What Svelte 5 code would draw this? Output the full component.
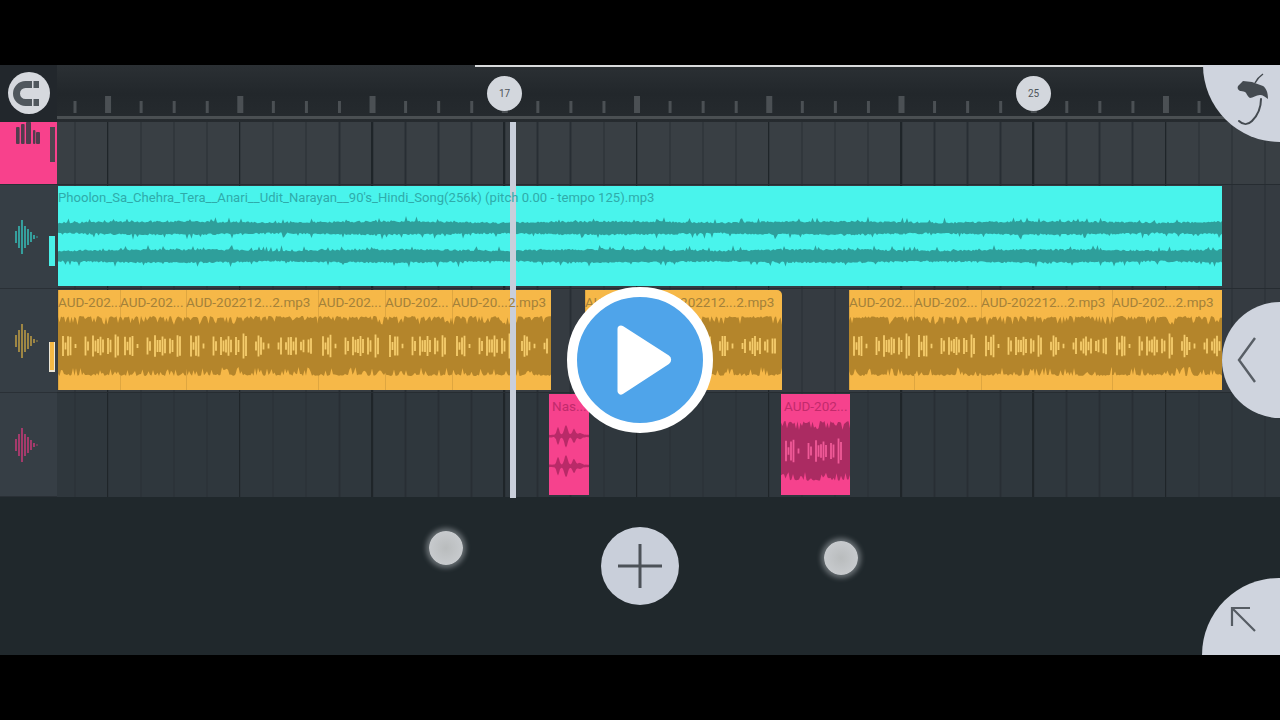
<script>
	const BEAT = 33.06;
	const ticks = [];
	for (let i = 0; i < 37; i++) {
		ticks.push({ x: 75 + i * BEAT - 57, tall: (i - 1) % 4 === 0 });
	}

	function rng(seed) {
		let s = seed * 9301 + 49297;
		return () => {
			s = (s * 1664525 + 1013904223) % 4294967296;
			return s / 4294967296;
		};
	}

	// mirrored envelope around cy, amp(x, rand) gives half height
	function band(w, cy, amp, seed, step = 1.5) {
		const r = rng(seed);
		const up = [];
		const down = [];
		for (let x = 0; x <= w + step; x += step) {
			up.push(`${x.toFixed(1)} ${(cy - amp(x, r)).toFixed(1)}`);
			down.unshift(`${x.toFixed(1)} ${(cy + amp(x, r)).toFixed(1)}`);
		}
		return 'M' + up.join('L') + 'L' + down.join('L') + 'Z';
	}

	// light spikes in the middle of a heavy clip, the same loop repeats every 66px
	const clusters = [
		[3, 13, 12],
		[16, 18, 3],
		[26, 30, 10],
		[33, 46, 11],
		[48, 53, 9],
		[56, 61, 13]
	];
	function spikes(w, cy, seed) {
		const r = rng(seed);
		let d = '';
		for (let x = 0; x < w; x += 2.5) {
			const p = x % 66;
			const c = clusters.find((k) => p >= k[0] && p <= k[1]);
			if (!c) continue;
			const a = c[2] * (0.3 + 0.7 * Math.abs(Math.sin(x * 0.85))) * (0.8 + r() * 0.2);
			d += `M${x} ${(cy - a).toFixed(1)}V${(cy + a).toFixed(1)}`;
		}
		return d;
	}

	const heavy = (x, r) => 30 - (r() < 0.4 ? r() * 9 : r() * 2);
	const thin = (x, r) => 4.2 + r() * 1.8 + (r() < 0.1 ? r() * 5 : 0) + Math.abs(Math.sin(x / 70)) * 1.4;
	const nasal = (x, r) => {
		const b = (c, s, a) => a * Math.exp(-((x - c) ** 2) / s);
		return 1 + b(9, 3, 8) + b(17, 5, 10) + b(25, 4, 6) + b(31, 6, 2) + r() * 0.5;
	};

	const yellow = [
		[58, 62, 'AUD-202...'],
		[120, 66, 'AUD-202...'],
		[186, 132, 'AUD-202212...2.mp3'],
		[318, 67, 'AUD-202...'],
		[385, 67, 'AUD-202...'],
		[452, 99, 'AUD-20...2.mp3'],
		[585, 65, 'AUD-202...'],
		[650, 132, 'AUD-202212...2.mp3'],
		[849, 65, 'AUD-202...'],
		[914, 67, 'AUD-202...'],
		[981, 131, 'AUD-202212...2.mp3'],
		[1112, 110, 'AUD-202...2.mp3']
	];
</script>

{#snippet meter(color)}
	<svg class="meter" width="26" height="36" viewBox="0 0 26 36" fill="none" stroke={color} stroke-width="1.4">
		<path d="M1 12v12M4 7v22M7 1v34M10 7v22M13 10v16M16 13v10M19 16v4M22 17.5v1" />
	</svg>
{/snippet}

<div class="screen">
	<div class="letterbox"></div>
	<main class="daw">
		<div class="progress"></div>

		<header class="ruler">
			<div class="ruler-left">
				<button class="magnet" aria-label="Snap">
					<svg width="32" height="30" viewBox="0 0 32 30" fill="none">
						<path d="M19 6.5h-6.5a9 9 0 0 0 0 18H19" stroke="#50575d" stroke-width="7" />
						<rect x="20.5" y="3" width="5.5" height="7" fill="#50575d" />
						<rect x="20.5" y="21" width="5.5" height="7" fill="#50575d" />
					</svg>
				</button>
			</div>
			<div class="ruler-track">
				<svg class="ticks" width="1223" height="57" viewBox="0 0 1223 57">
					{#each ticks as t}
						<rect
							x={t.tall ? t.x - 3 : t.x - 1.5}
							y={t.tall ? 31 : 36}
							width={t.tall ? 6 : 3}
							height={t.tall ? 17 : 12}
							fill="#4b5054"
						/>
					{/each}
				</svg>
				<span class="badge b17">17</span>
				<span class="badge b25">25</span>
				<div class="ruler-band"></div>
			</div>
		</header>

		<section class="tracks">
			<div class="playhead"></div>

			<div class="track row-first">
				<div class="head head-pink">
					<svg class="eq" width="26" height="22" viewBox="0 0 26 22" fill="#513d4e">
						<rect x="1" y="5" width="3.6" height="17" rx="1" />
						<rect x="6" y="2" width="3.6" height="20" rx="1" />
						<rect x="11" y="0" width="5" height="22" rx="1" />
						<rect x="18" y="8" width="2.4" height="14" rx="1" />
						<rect x="21" y="10" width="4" height="12" rx="1" />
					</svg>
					<span class="slider slider-dark"></span>
				</div>
				<div class="lane lane-top"></div>
			</div>

			<div class="track row-cyan">
				<div class="head">
					{@render meter('#35c8c2')}
					<span class="slider slider-cyan"></span>
				</div>
				<div class="lane">
					<div class="clip cyan" style="left:1px;width:1164px">
						<span class="label">Phoolon_Sa_Chehra_Tera__Anari__Udit_Narayan__90's_Hindi_Song(256k) (pitch 0.00 - tempo 125).mp3</span>
						<svg class="wave" width="1164" height="100" viewBox="0 0 1164 100" fill="#2e9f9b">
							<path d={band(1164, 42, thin, 3)} />
							<path d={band(1164, 70, thin, 8)} />
						</svg>
					</div>
				</div>
			</div>

			<div class="track row-yellow">
				<div class="head">
					{@render meter('#c9a545')}
					<span class="slider slider-yellow"></span>
				</div>
				<div class="lane">
					{#each yellow as [x, w, label], i}
						<div class="clip gold" class:rounded={x === 650} style="left:{x - 57}px;width:{w}px">
							<span class="label">{label}</span>
							<svg class="wave" width={w} height="100" viewBox="0 0 {w} 100">
								<path d={band(w, 56, heavy, 20 + i)} fill="#b4852b" />
								<path d={spikes(w, 56, 40 + i)} stroke="#f6cd6d" stroke-width="1.8" fill="none" />
							</svg>
						</div>
					{/each}
				</div>
			</div>

			<div class="track row-pink">
				<div class="head">
					{@render meter('#d23a7c')}
				</div>
				<div class="lane lane-bottom">
					<div class="clip pink nas">
						<span class="label">Nas...</span>
						<svg class="wave" width="40" height="101" viewBox="0 0 40 101" fill="#b92a68">
							<path d={band(40, 42, nasal, 5, 1)} />
							<path d={band(40, 72, nasal, 6, 1)} />
						</svg>
					</div>
					<div class="clip pink aud">
						<span class="label">AUD-202...</span>
						<svg class="wave" width="69" height="101" viewBox="0 0 69 101">
							<path d={band(69, 57, heavy, 11)} fill="#ab2b62" />
							<path d={spikes(69, 57, 12)} stroke="#f05a98" stroke-width="1.8" fill="none" />
						</svg>
					</div>
				</div>
			</div>
		</section>

		<footer class="footer">
			<button class="plus" aria-label="Add">
				<svg width="46" height="46" viewBox="0 0 46 46" stroke="#4c5258" stroke-width="3" fill="none">
					<path d="M23 1v44M1 23h44" />
				</svg>
			</button>
		</footer>

		<!-- overlays -->
		<button class="corner fruit" aria-label="Menu">
			<svg width="40" height="60" viewBox="0 0 40 60" fill="none">
				<path
					d="M3 14L8 9l9 1 11 4c3 2 5 6 5 13-3-2-5-4-8-4-4 0-7 3-10 3-3-2-4-6-5-6-2-1-4-1-5-1-2-1-3-3-2-5z"
					fill="#444a50"
				/>
				<path d="M20 11c2-4 5-7 8-9" stroke="#444a50" stroke-width="1.5" />
				<path d="M26 27c0 9-4 17-9 22-4 4-9 4-13 0" stroke="#444a50" stroke-width="2" stroke-linecap="round" />
			</svg>
		</button>
		<button class="corner back" aria-label="Back">
			<svg width="22" height="48" viewBox="0 0 22 48" fill="none" stroke="#585e65" stroke-width="2.4">
				<path d="M18 2L2 24l16 22" />
			</svg>
		</button>
		<button class="corner expand" aria-label="Expand">
			<svg width="28" height="28" viewBox="0 0 28 28" fill="none" stroke="#565c63" stroke-width="2.2">
				<path d="M26 26L3 3M3 21V3h18" />
			</svg>
		</button>

		<span class="touch t1"></span>
		<span class="touch t2"></span>

		<button class="play" aria-label="Play">
			<svg width="58" height="72" viewBox="0 0 58 72">
				<path d="M5 5L51 34.5a1.5 1.5 0 0 1 0 2.5L5 67z" fill="#fff" stroke="#fff" stroke-width="7" stroke-linejoin="round" />
			</svg>
		</button>
	</main>
	<div class="letterbox"></div>
</div>

<style>
	:global(body) {
		margin: 0;
		background: #000;
	}

	.screen {
		width: 1280px;
		height: 720px;
		display: flex;
		flex-direction: column;
		font-family: Roboto, 'Liberation Sans', sans-serif;
		overflow: hidden;
	}

	.letterbox {
		height: 65px;
		flex: none;
		background: #000;
	}

	.daw {
		position: relative;
		height: 590px;
		flex: none;
		display: flex;
		flex-direction: column;
		background: #20282c;
		overflow: hidden;
	}

	button {
		border: 0;
		padding: 0;
		display: flex;
		align-items: center;
		justify-content: center;
	}

	.progress {
		position: absolute;
		left: 475px;
		top: 0;
		width: 730px;
		height: 2px;
		background: #d8dadc;
		z-index: 2;
	}

	/* ruler */
	.ruler {
		height: 57px;
		flex: none;
		display: flex;
		background: linear-gradient(#2b3034, #22272b 50%, #262b2f);
	}

	.ruler-left {
		width: 57px;
		flex: none;
		display: flex;
		align-items: center;
		padding-left: 8px;
		box-sizing: border-box;
		background: #22272c;
	}

	.magnet {
		width: 42px;
		height: 42px;
		margin-top: -2px;
		border-radius: 50%;
		background: #d6d9de;
	}

	.ruler-track {
		position: relative;
		flex: 1;
	}

	.ticks {
		display: block;
	}

	.ruler-band {
		position: absolute;
		left: 0;
		right: 0;
		top: 51px;
		height: 3px;
		background: #4a4f52;
	}

	.badge {
		position: absolute;
		top: 11px;
		width: 35px;
		height: 35px;
		border-radius: 50%;
		background: #d3d7dd;
		color: #4e545a;
		font-size: 10px;
		line-height: 35px;
		text-align: center;
	}

	.b17 {
		left: 430px;
	}

	.b25 {
		left: 959px;
	}

	/* tracks */
	.tracks {
		position: relative;
		display: flex;
		flex-direction: column;
		flex: none;
	}

	.playhead {
		position: absolute;
		left: 510px;
		top: 0;
		bottom: -1px;
		width: 6px;
		background: #c9cfdb;
		z-index: 1;
	}

	.track {
		display: flex;
		flex: none;
	}

	.row-first {
		height: 63px;
	}

	.row-cyan,
	.row-yellow,
	.row-pink {
		height: 104px;
	}

	.head {
		position: relative;
		width: 57px;
		flex: none;
		display: flex;
		align-items: center;
		padding-left: 15px;
		box-sizing: border-box;
		background: #363e45;
		box-shadow: inset 0 -1px 0 #2a3036;
	}

	.head-pink {
		background: #f8418c;
		align-items: flex-start;
		padding-left: 15px;
	}

	.eq {
		display: block;
	}

	.meter {
		display: block;
		margin-top: -1px;
	}

	.slider {
		position: absolute;
		left: 49px;
		width: 6px;
	}

	.slider-dark {
		top: 5px;
		height: 35px;
		left: 50px;
		width: 5px;
		background: #4f4650;
	}

	.slider-cyan {
		top: 51px;
		height: 30px;
		background: #4af0e8;
	}

	.slider-yellow {
		top: 53px;
		height: 30px;
		background: #f4b945;
		border: solid #ece6d6;
		border-width: 0 1px 2px 1px;
		box-sizing: border-box;
	}

	.lane {
		position: relative;
		flex: 1;
		background-color: #353b41;
		background-image:
			repeating-linear-gradient(90deg, transparent 0 130.74px, #1f2529 130.74px 132.24px),
			repeating-linear-gradient(90deg, transparent 0 31.56px, #282e34 31.56px 33.06px);
		background-position: -81px 0, -14.5px 0;
		box-shadow: inset 0 -1px 0 #262c31;
	}

	.lane-top {
		background-color: #393f44;
	}

	.lane-bottom {
		background-color: #2f373d;
		box-shadow: none;
	}

	.clip {
		position: absolute;
		top: 1px;
		height: 100px;
		box-sizing: border-box;
		overflow: hidden;
		box-shadow: inset 1px 0 0 rgba(150, 110, 40, 0.25);
	}

	.rounded {
		border-top-right-radius: 5px;
	}

	.label {
		position: absolute;
		left: 0;
		top: 5px;
		font-size: 13.5px;
		line-height: 14px;
		white-space: nowrap;
		z-index: 1;
	}

	.wave {
		position: absolute;
		left: 0;
		top: 0;
		display: block;
	}

	.cyan {
		background: #49f4ec;
		box-shadow: none;
	}

	.cyan .label {
		color: #2fabaa;
		font-size: 13.1px;
	}

	.gold {
		background: #f6b848;
	}

	.gold .label {
		color: #a3813a;
	}

	.pink {
		background: #f6428d;
		box-shadow: none;
		height: 101px;
	}

	.pink .label {
		color: #c22a6c;
		left: 3px;
	}

	.nas {
		left: 492px;
		width: 40px;
	}

	.aud {
		left: 724px;
		width: 69px;
	}

	/* footer */
	.footer {
		flex: 1;
		display: flex;
		justify-content: center;
		align-items: flex-start;
		padding-top: 30px;
		background: #20282c;
	}

	.plus {
		width: 78px;
		height: 78px;
		margin-left: -1px;
		border-radius: 50%;
		background: #c9cfda;
	}

	/* overlays */
	.corner {
		position: absolute;
		right: 0;
		background: #cfd4de;
		z-index: 2;
	}

	.fruit {
		top: -77px;
		width: 77px;
		height: 154px;
		border-radius: 77px 0 0 77px;
		justify-content: flex-start;
	}

	.fruit svg {
		position: absolute;
		left: 32px;
		top: 84px;
	}

	.back {
		top: 237px;
		width: 58px;
		height: 116px;
		border-radius: 58px 0 0 58px;
		justify-content: flex-start;
		padding-left: 15px;
		box-sizing: border-box;
	}

	.expand {
		top: 513px;
		width: 78px;
		height: 154px;
		border-radius: 77px 0 0 77px;
	}

	.expand svg {
		position: absolute;
		left: 27px;
		top: 27px;
	}

	.touch {
		position: absolute;
		width: 34px;
		height: 34px;
		border-radius: 50%;
		background: radial-gradient(circle, #b9bcbd, #cdd0d4);
		box-shadow: 0 0 5px 3px rgba(210, 214, 220, 0.4);
		z-index: 2;
	}

	.t1 {
		left: 429px;
		top: 466px;
	}

	.t2 {
		left: 824px;
		top: 476px;
	}

	.play {
		position: absolute;
		left: 567px;
		top: 222px;
		width: 146px;
		height: 146px;
		box-sizing: border-box;
		border: 10px solid #fff;
		border-radius: 50%;
		background: #4fa4ea;
		z-index: 3;
		padding-left: 10px;
	}
</style>
